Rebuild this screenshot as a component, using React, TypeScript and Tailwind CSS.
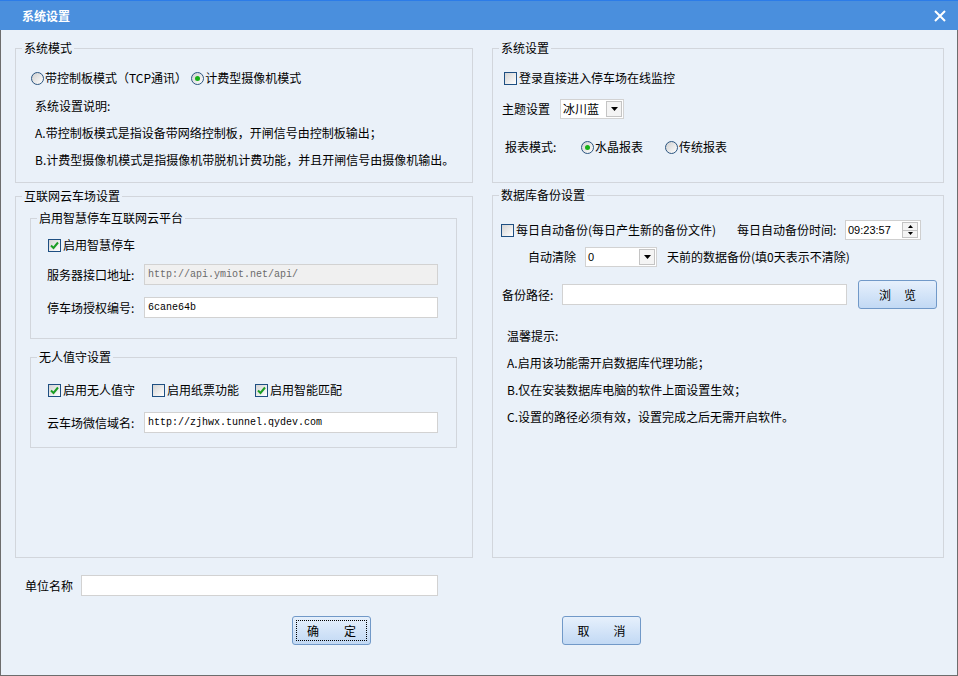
import React from 'react'

const FONT = '"Noto Sans CJK SC", "Noto Sans", sans-serif'

function CheckBox({ checked, label }: { checked?: boolean; label: string }) {
  return (
    <div className="flex items-center h-5">
      <span className="w-[13px] h-[13px] border border-[#1e4f82] bg-linear-to-br from-[#d4d4d4] to-white flex items-center justify-center">
        {checked && (
          <svg width="9" height="9" viewBox="0 0 9 9">
            <path d="M1 4.5 L3.5 7 L8 1.5" stroke="#1c9e24" strokeWidth="2" fill="none" />
          </svg>
        )}
      </span>
      <span className="ml-[2px] leading-4">{label}</span>
    </div>
  )
}

function Radio({ checked, label }: { checked?: boolean; label: string }) {
  return (
    <div className="flex items-center h-5">
      <span className="w-[13px] h-[13px] rounded-full border border-[#2b5580] bg-linear-to-br from-[#d0d0d0] to-white flex items-center justify-center">
        {checked && <span className="w-[5px] h-[5px] rounded-full bg-[#16b016]" />}
      </span>
      <span className="ml-[1px] leading-4">{label}</span>
    </div>
  )
}

function Group({ title, className, children }: { title: string; className?: string; children?: React.ReactNode }) {
  return (
    <fieldset className={`border border-[#d2d6dc] min-w-0 ${className ?? ''}`}>
      <legend className="ml-[6px] px-[2px] leading-4 text-[12px]">{title}</legend>
      {children}
    </fieldset>
  )
}

function TextBox({ value, width, disabled }: { value?: string; width: string; disabled?: boolean }) {
  return (
    <div
      className={`h-[21px] border border-[#d2d2d2] flex items-center px-[3px] text-[10px] ${width} ${
        disabled ? 'bg-[#f0f0f0] text-[#6b6b6b]' : 'bg-white text-black'
      }`}
      style={{ fontFamily: '"Liberation Mono", monospace' }}
    >
      {value}
    </div>
  )
}

function DropArrow() {
  return (
    <span className="w-[16px] h-[16px] border border-[#c4c4c4] bg-[#f4f4f4] flex items-center justify-center">
      <svg width="7" height="4" viewBox="0 0 7 4">
        <path d="M0 0 H7 L3.5 4 Z" fill="#000" />
      </svg>
    </span>
  )
}

function Button({ chars, gap, focused }: { chars: string[]; gap: string; focused?: boolean }) {
  return (
    <div className="relative w-[79px] h-[29px] rounded-[3px] border border-[#7199c8] bg-linear-to-b from-[#e6f0fc] to-[#c2d9f4] flex items-center justify-center">
      {focused && <span className="absolute inset-[3px] border border-dotted border-black" />}
      <div className={`flex ${gap} text-[12px] leading-4`}>
        {chars.map((c) => (
          <span key={c}>{c}</span>
        ))}
      </div>
    </div>
  )
}

export default function App() {
  return (
    <div className="w-[958px] h-[676px] flex flex-col bg-[#eaf1f9] text-black text-[12px]" style={{ fontFamily: FONT }}>
      {/* Title bar */}
      <div className="h-[30px] shrink-0 bg-[#4a8fdd] border-t border-[#2c7ce8] flex items-center justify-between pl-[22px] pr-[12px]">
        <span className="text-white font-bold text-[12px] leading-4">系统设置</span>
        <svg width="12" height="12" viewBox="0 0 12 12">
          <path d="M1 1 L11 11 M11 1 L1 11" stroke="#fff" strokeWidth="2" />
        </svg>
      </div>

      <div className="flex-1 border-x border-b border-[#6d6d6d] pl-[14px] pr-[13px] pt-[10px]">
        <div className="flex gap-[19px]">
          {/* Left column */}
          <div className="w-[458px] flex flex-col gap-[5px]">
            <Group title="系统模式" className="h-[143px]">
              <div className="mt-[12px] pl-[15px] flex gap-[4px]">
                <Radio label="带控制板模式（TCP通讯）" />
                <Radio checked label="计费型摄像机模式" />
              </div>
              <div className="mt-[4px] pl-[19px]">
                <div className="h-[27px] flex items-center">系统设置说明:</div>
                <div className="h-[27px] flex items-center">A.带控制板模式是指设备带网络控制板，开闸信号由控制板输出；</div>
                <div className="h-[27px] flex items-center">B.计费型摄像机模式是指摄像机带脱机计费功能，并且开闸信号由摄像机输出。</div>
              </div>
            </Group>

            <Group title="互联网云车场设置" className="h-[370px]">
              <div className="mt-[6px] ml-[14px] w-[427px]">
                <Group title="启用智慧停车互联网云平台" className="h-[129px]">
                  <div className="mt-[9px] pl-[17px]">
                    <CheckBox checked label="启用智慧停车" />
                  </div>
                  <div className="mt-[9px] pl-[16px] flex items-center">
                    <span className="w-[97px] leading-4">服务器接口地址:</span>
                    <TextBox disabled value="http://api.ymiot.net/api/" width="w-[294px]" />
                  </div>
                  <div className="mt-[12px] pl-[16px] flex items-center">
                    <span className="w-[97px] leading-4">停车场授权编号:</span>
                    <TextBox value="6cane64b" width="w-[294px]" />
                  </div>
                </Group>
                <Group title="无人值守设置" className="h-[99px] mt-[10px]">
                  <div className="mt-[15px] pl-[17px] flex">
                    <div className="w-[104px]">
                      <CheckBox checked label="启用无人值守" />
                    </div>
                    <div className="w-[103px]">
                      <CheckBox label="启用纸票功能" />
                    </div>
                    <CheckBox checked label="启用智能匹配" />
                  </div>
                  <div className="mt-[12px] pl-[16px] flex items-center">
                    <span className="w-[97px] leading-4">云车场微信域名:</span>
                    <TextBox value="http://zjhwx.tunnel.qydev.com" width="w-[294px]" />
                  </div>
                </Group>
              </div>
            </Group>
          </div>

          {/* Right column */}
          <div className="w-[452px] flex flex-col gap-[4px]">
            <Group title="系统设置" className="h-[143px]">
              <div className="mt-[12px] pl-[11px]">
                <CheckBox label="登录直接进入停车场在线监控" />
              </div>
              <div className="mt-[11px] pl-[9px] flex items-center h-5">
                <span className="w-[58px] leading-4">主题设置</span>
                <div className="w-[64px] h-[20px] border border-[#d2d2d2] bg-white flex items-center justify-between pl-[2px] pr-[1px]">
                  <span className="leading-4">冰川蓝</span>
                  <DropArrow />
                </div>
              </div>
              <div className="mt-[18px] pl-[12px] flex items-center h-5">
                <span className="w-[76px] leading-4">报表模式:</span>
                <div className="w-[84px]">
                  <Radio checked label="水晶报表" />
                </div>
                <Radio label="传统报表" />
              </div>
            </Group>

            <Group title="数据库备份设置" className="h-[371px]">
              <div className="mt-[17px] pl-[8px] flex items-center h-5">
                <div className="w-[236px]">
                  <CheckBox label="每日自动备份(每日产生新的备份文件)" />
                </div>
                <span className="w-[108px] leading-4">每日自动备份时间:</span>
                <div className="w-[76px] h-[20px] border border-[#cfcfcf] bg-white flex items-center justify-between pl-[2px] pr-[2px]">
                  <span className="text-[11px] leading-4" style={{ fontFamily: '"Liberation Sans", sans-serif' }}>
                    09:23:57
                  </span>
                  <div className="flex flex-col w-[16px] h-[16px] border border-[#c4c4c4] bg-[#f4f4f4]">
                    <div className="flex-1 flex items-center justify-center border-b border-[#c4c4c4]">
                      <svg width="5" height="3" viewBox="0 0 5 3">
                        <path d="M0 3 H5 L2.5 0 Z" fill="#000" />
                      </svg>
                    </div>
                    <div className="flex-1 flex items-center justify-center">
                      <svg width="5" height="3" viewBox="0 0 5 3">
                        <path d="M0 0 H5 L2.5 3 Z" fill="#000" />
                      </svg>
                    </div>
                  </div>
                </div>
              </div>
              <div className="mt-[7px] pl-[35px] flex items-center h-5">
                <span className="w-[57px] leading-4">自动清除</span>
                <div className="w-[72px] h-[20px] border border-[#d2d2d2] bg-white flex items-center justify-between pl-[2px] pr-[1px]">
                  <span className="text-[11px] leading-4" style={{ fontFamily: '"Liberation Sans", sans-serif' }}>
                    0
                  </span>
                  <DropArrow />
                </div>
                <span className="ml-[10px] leading-4">天前的数据备份(填0天表示不清除)</span>
              </div>
              <div className="mt-[13px] pl-[9px] flex items-center h-[29px]">
                <span className="w-[60px] leading-4">备份路径:</span>
                <TextBox width="w-[285px]" />
                <div className="ml-[11px]">
                  <Button chars={['浏', '览']} gap="gap-[13px]" />
                </div>
              </div>
              <div className="mt-[13px] pl-[14px]">
                <div className="h-[27px] flex items-center">温馨提示:</div>
                <div className="h-[27px] flex items-center">A.启用该功能需开启数据库代理功能；</div>
                <div className="h-[27px] flex items-center">B.仅在安装数据库电脑的软件上面设置生效；</div>
                <div className="h-[27px] flex items-center">C.设置的路径必须有效，设置完成之后无需开启软件。</div>
              </div>
            </Group>
          </div>
        </div>

        {/* Unit name */}
        <div className="mt-[17px] pl-[10px] flex items-center">
          <span className="w-[56px] leading-4">单位名称</span>
          <TextBox width="w-[357px]" />
        </div>

        {/* Buttons */}
        <div className="mt-[20px] flex">
          <div className="ml-[277px]">
            <Button focused chars={['确', '定']} gap="gap-[25px]" />
          </div>
          <div className="ml-[191px]">
            <Button chars={['取', '消']} gap="gap-[24px]" />
          </div>
        </div>
      </div>
    </div>
  )
}
